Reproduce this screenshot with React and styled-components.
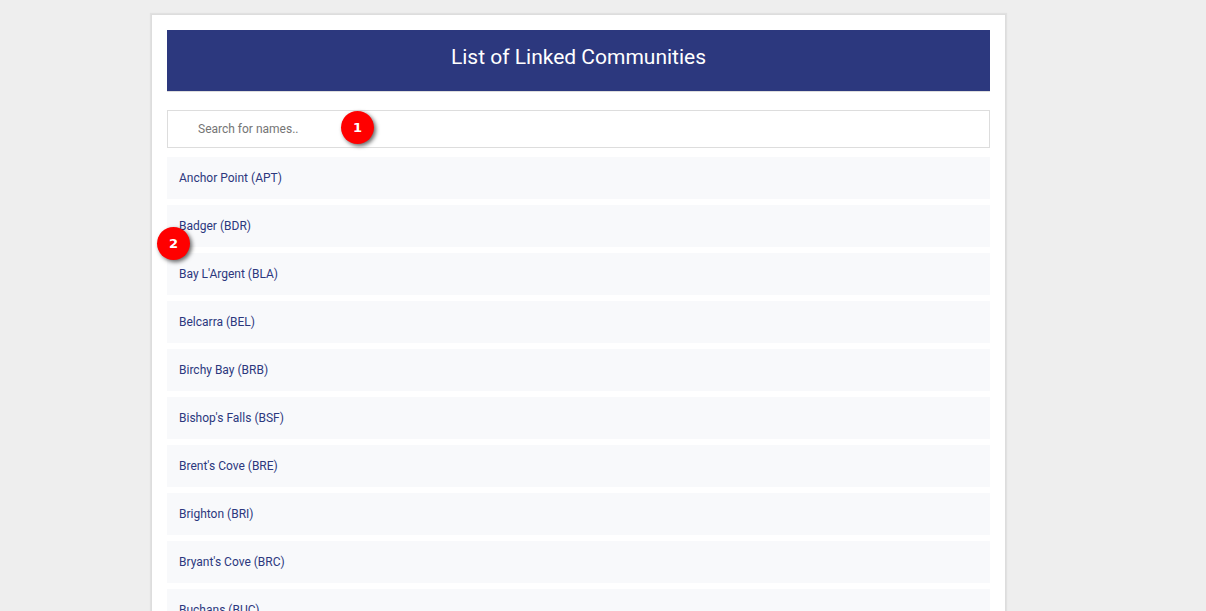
import React, { useState } from 'react';
import styled, { createGlobalStyle } from 'styled-components';

const GlobalStyle = createGlobalStyle`
  * { box-sizing: border-box; }
  body {
    margin: 0;
    background: #eeeeee;
    font-family: Roboto, "Liberation Sans", sans-serif;
    font-size: 12px;
    color: #2c387e;
  }
`;

const Page = styled.div`
  height: 100vh;
  overflow-y: auto;
  scrollbar-width: none;
  padding: 14px 200px 0 151px;
`;

const Card = styled.main`
  background: #ffffff;
  border: 1px solid #dddddd;
  box-shadow: 0 0 1px 1px rgba(0, 0, 0, 0.05);
  padding: 15px;
`;

const Banner = styled.h1`
  margin: 0 0 18px;
  padding: 13px 16px 20px;
  border-bottom: 1px solid #dddddd;
  background: #2c387e;
  background-clip: padding-box;
  color: #ffffff;
  font-size: 21px;
  line-height: 28px;
  font-weight: 400;
  text-align: center;
`;

const SearchField = styled.div`
  position: relative;
  margin-bottom: 9px;
`;

const SearchInput = styled.input`
  display: block;
  width: 100%;
  height: 38px;
  padding: 0 16px 0 30px;
  border: 1px solid #dddddd;
  border-radius: 0;
  background: #ffffff;
  color: #333333;
  font: inherit;
  outline: none;
  &::placeholder { color: #757575; opacity: 1; }
`;

const List = styled.ul`
  position: relative;
  display: flex;
  flex-direction: column;
  gap: 6px;
  margin: 0;
  padding: 0;
  list-style: none;
`;

const CommunityLink = styled.a`
  display: block;
  padding: 12px;
  line-height: 18px;
  background: #f8f9fb;
  color: #2c387e;
  text-decoration: none;
`;

const Marker = styled.span`
  position: absolute;
  left: ${(p) => p.$left}px;
  top: ${(p) => p.$top}px;
  display: flex;
  align-items: center;
  justify-content: center;
  width: 33px;
  height: 33px;
  border-radius: 50%;
  background: #ff0000;
  color: #ffffff;
  box-shadow: 2px 2px 4px rgba(0, 0, 0, 0.6);
  font-family: "DejaVu Sans", sans-serif;
  font-size: 13px;
  line-height: 15px;
  font-weight: 700;
  pointer-events: none;
`;

const communities = [
  'Anchor Point (APT)',
  'Badger (BDR)',
  "Bay L'Argent (BLA)",
  'Belcarra (BEL)',
  'Birchy Bay (BRB)',
  "Bishop's Falls (BSF)",
  "Brent's Cove (BRE)",
  'Brighton (BRI)',
  "Bryant's Cove (BRC)",
  'Buchans (BUC)',
];

export default function App() {
  const [query, setQuery] = useState('');
  const shown = communities.filter((name) => name.toLowerCase().includes(query.toLowerCase()));
  return (
    <Page>
      <GlobalStyle />
      <Card>
        <Banner>List of Linked Communities</Banner>
        <SearchField>
          <SearchInput
            type="text"
            aria-label="Search for names"
            placeholder="Search for names.."
            value={query}
            onChange={(e) => setQuery(e.target.value)}
          />
          <Marker $left={174} $top={1}>1</Marker>
        </SearchField>
        <List>
          {shown.map((name) => (
            <li key={name}><CommunityLink href="#">{name}</CommunityLink></li>
          ))}
          <Marker as="li" $left={-10} $top={70}>2</Marker>
        </List>
      </Card>
    </Page>
  );
}
